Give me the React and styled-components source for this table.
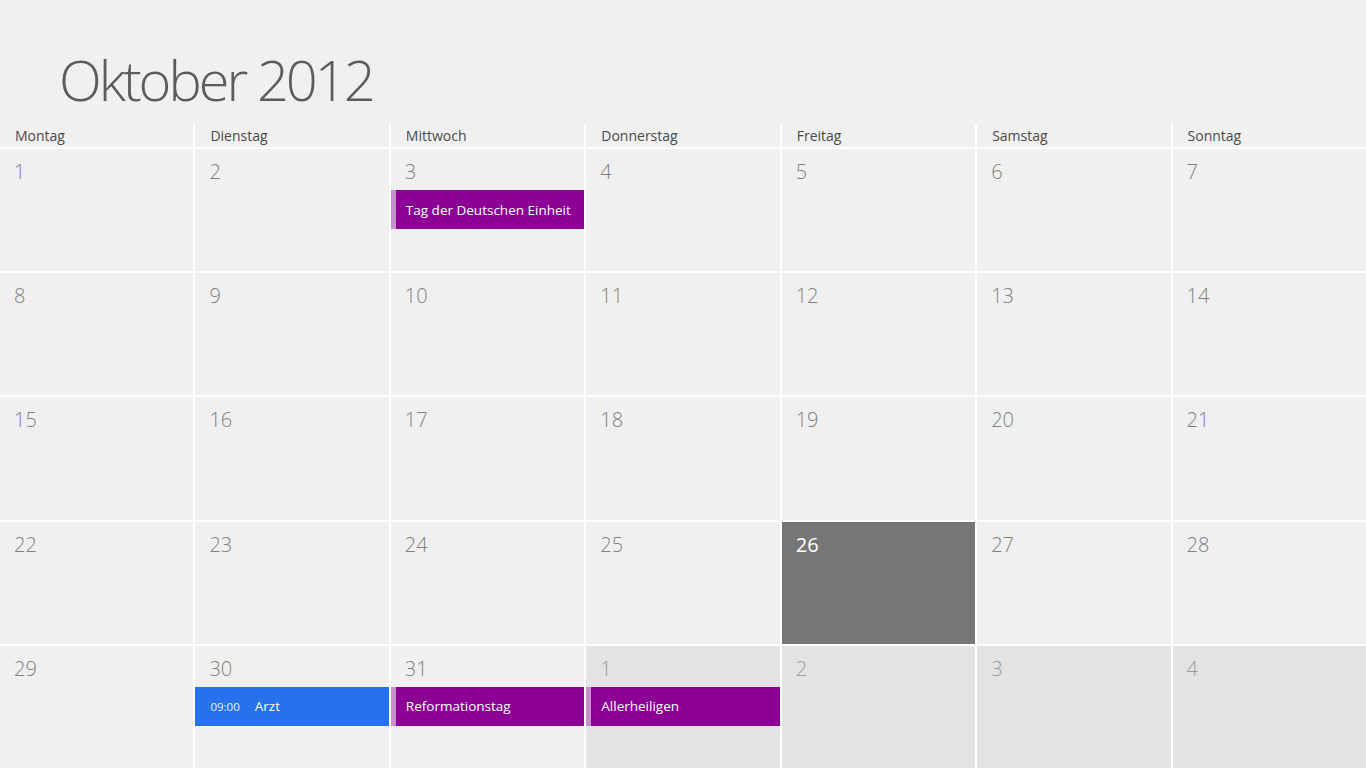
import React from "react";
import styled, { createGlobalStyle } from "styled-components";

const Global = createGlobalStyle`
  html, body { margin: 0; padding: 0; background: #f0f0f0; }
  body { font-family: "Open Sans", "Noto Sans", sans-serif; }
  * { box-sizing: border-box; }
`;

const Page = styled.div`
  width: 1366px;
  height: 768px;
  display: flex;
  flex-direction: column;
  background: #f0f0f0;
  overflow: hidden;
`;

const TitleBar = styled.header`
  height: 124px;
  flex: none;
  padding: 51px 0 0 59px;
`;

const Title = styled.h1`
  margin: 0;
  font-family: "Open Sans", "Noto Sans", sans-serif;
  font-weight: 300;
  font-size: 56px;
  line-height: 1;
  color: #5b5b5b;
  letter-spacing: -3px;
`;

const Grid = styled.div`
  flex: 1;
  display: grid;
  grid-template-columns: repeat(7, 1fr);
  grid-template-rows: 23px repeat(5, 1fr);
  gap: 2px;
  background: #ffffff;
`;

const Weekday = styled.div`
  background: #f0f0f0;
  padding: 0 15px 1px;
  display: flex;
  align-items: center;
  font-size: 14px;
  color: #4a4a4a;
`;

const Cell = styled.div`
  background: ${(p) => (p.$today ? "#767676" : p.$other ? "#e3e3e3" : "#f0f0f0")};
  display: flex;
  flex-direction: column;
  min-height: 0;
`;

const DayNum = styled.div`
  padding: 11px 15px 0 14px;
  height: 41px;
  font-size: 20px;
  line-height: 24px;
  font-weight: ${(p) => (p.$today ? 400 : 300)};
  color: ${(p) => (p.$today ? "#ffffff" : p.$other ? "#9a9a9a" : "#808080")};
`;

const Event = styled.div`
  height: 39px;
  display: flex;
  align-items: center;
  gap: 15px;
  padding-left: ${(p) => (p.$accent ? "10px" : "15px")};
  background: ${(p) => p.$color};
  border-left: ${(p) => (p.$accent ? "5px solid #c790cc" : "none")};
  color: #ffffff;
  font-size: 13.5px;
  white-space: nowrap;
  overflow: hidden;
`;

const Time = styled.span`
  font-size: 11.5px;
  color: #e8efff;
`;

const weekdays = ["Montag", "Dienstag", "Mittwoch", "Donnerstag", "Freitag", "Samstag", "Sonntag"];

const PURPLE = "#8c0095";
const BLUE = "#2672ec";

const events = {
  3: [{ title: "Tag der Deutschen Einheit", color: PURPLE, accent: true }],
  30: [{ time: "09:00", title: "Arzt", color: BLUE }],
  31: [{ title: "Reformationstag", color: PURPLE, accent: true }],
  "n1": [{ title: "Allerheiligen", color: PURPLE, accent: true }],
};

const days = [];
for (let d = 1; d <= 31; d++) days.push({ n: d, key: d });
for (let d = 1; d <= 4; d++) days.push({ n: d, key: "n" + d, other: true });

export default function App() {
  return (
    <>
      <Global />
      <Page>
        <TitleBar>
          <Title>Oktober 2012</Title>
        </TitleBar>
        <Grid>
          {weekdays.map((w) => (
            <Weekday key={w}>{w}</Weekday>
          ))}
          {days.map((d) => {
            const today = d.n === 26 && !d.other;
            return (
              <Cell key={d.key} $today={today} $other={d.other}>
                <DayNum $today={today} $other={d.other}>{d.n}</DayNum>
                {(events[d.key] || []).map((e) => (
                  <Event key={e.title} $color={e.color} $accent={e.accent}>
                    {e.time && <Time>{e.time}</Time>}
                    <span>{e.title}</span>
                  </Event>
                ))}
              </Cell>
            );
          })}
        </Grid>
      </Page>
    </>
  );
}
